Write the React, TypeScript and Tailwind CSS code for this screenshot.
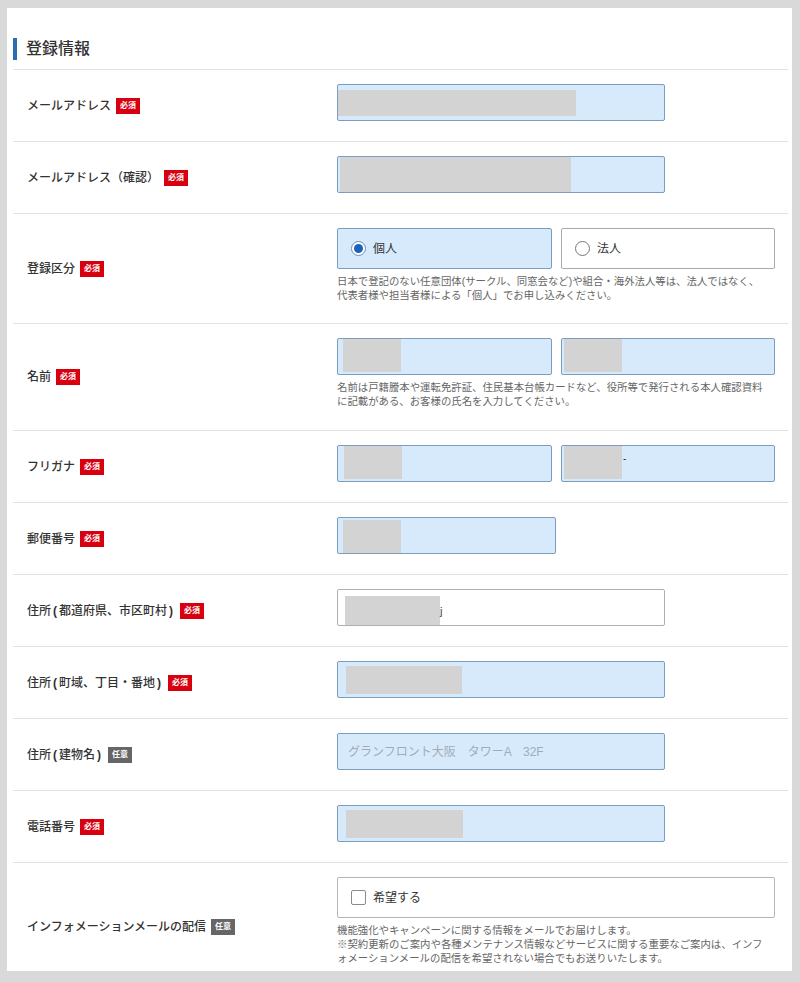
import type { ReactNode } from "react";

const FONT = "font-['Liberation_Sans','Noto_Sans_CJK_JP',sans-serif]";

export default function App() {
  return (
    <div className={`${FONT} min-h-[982px] bg-[#d9d9d9] pt-[8px] pb-[11px] pl-[7px] pr-[8px]`}>
      <div className="bg-white pl-[6px] pr-[4px]">
        <div className="flex items-center pt-[30px] pb-[9px]">
          <span className="h-[22px] w-[4px] bg-[#2a6db0]" />
          <h1 className="ml-[9px] text-[16px] font-medium leading-[22px] text-[#333]">登録情報</h1>
        </div>

        <Row label="メールアドレス" badge="required" height="h-[72px]">
          <Field width="w-[328px]">
            <Redact className="-ml-[2px] h-[26px] w-[240px]" />
          </Field>
        </Row>

        <Row label="メールアドレス（確認）" badge="required" height="h-[72px]">
          <Field width="w-[328px]">
            <Redact className="ml-[2px] h-[35px] w-[231px]" />
          </Field>
        </Row>

        <Row label="登録区分" badge="required" height="h-[110px]">
          <div className="flex gap-[9px]">
            <RadioBox label="個人" checked />
            <RadioBox label="法人" />
          </div>
          <Help>
            日本で登記のない任意団体(サークル、同窓会など)や組合・海外法人等は、法人ではなく、
            <br />
            代表者様や担当者様による「個人」でお申し込みください。
          </Help>
        </Row>

        <Row label="名前" badge="required" height="h-[107px]">
          <div className="flex gap-[9px]">
            <Field width="w-[215px]" align="items-start">
              <Redact className="ml-[5px] h-[33px] w-[58px]" />
            </Field>
            <Field width="w-[214px]" align="items-start">
              <Redact className="ml-[2px] h-[33px] w-[58px]" />
            </Field>
          </div>
          <Help>
            名前は戸籍謄本や運転免許証、住民基本台帳カードなど、役所等で発行される本人確認資料
            <br />
            に記載がある、お客様の氏名を入力してください。
          </Help>
        </Row>

        <Row label="フリガナ" badge="required" height="h-[72px]">
          <div className="flex gap-[9px]">
            <Field width="w-[215px]" align="items-start">
              <Redact className="ml-[6px] h-[33px] w-[58px]" />
            </Field>
            <Field width="w-[214px]" align="items-start">
              <Redact className="ml-[2px] h-[33px] w-[58px]" />
              <span className="ml-[1px] mt-[8px] text-[10px] leading-none text-[#333]">-</span>
            </Field>
          </div>
        </Row>

        <Row label="郵便番号" badge="required" height="h-[72px]">
          <Field width="w-[219px]" align="items-end">
            <Redact className="ml-[5px] h-[33px] w-[58px]" />
          </Field>
        </Row>

        <Row label="住所(都道府県、市区町村)" badge="required" height="h-[72px]">
          <Field width="w-[328px]" tone="plain" align="items-end">
            <Redact className="ml-[7px] h-[29px] w-[95px]" />
            <span className="mb-[8px] text-[11px] leading-none text-[#444]">j</span>
          </Field>
        </Row>

        <Row label="住所(町域、丁目・番地)" badge="required" height="h-[72px]">
          <Field width="w-[328px]">
            <Redact className="ml-[8px] h-[28px] w-[116px]" />
          </Field>
        </Row>

        <Row label="住所(建物名)" badge="optional" height="h-[72px]">
          <Field width="w-[328px]">
            <span className="pl-[10px] text-[12px] text-[#a3acb6]">グランフロント大阪　タワーA　32F</span>
          </Field>
        </Row>

        <Row label="電話番号" badge="required" height="h-[72px]">
          <Field width="w-[328px]">
            <Redact className="ml-[8px] h-[28px] w-[117px]" />
          </Field>
        </Row>

        <Row label="インフォメーションメールの配信" badge="optional" height="h-[109px]" last>
          <div className="flex h-[41px] w-[438px] items-center rounded-[2px] border border-[#b5b5b5] bg-white pl-[13px]">
            <span className="h-[15px] w-[15px] rounded-[2px] border border-[#8a8a8a] bg-white" />
            <span className="ml-[7px] text-[12px] text-[#333]">希望する</span>
          </div>
          <Help>
            機能強化やキャンペーンに関する情報をメールでお届けします。
            <br />
            ※契約更新のご案内や各種メンテナンス情報などサービスに関する重要なご案内は、インフ
            <br />
            ォメーションメールの配信を希望されない場合でもお送りいたします。
          </Help>
        </Row>
      </div>
    </div>
  );
}

function Row({
  label,
  badge,
  height,
  last,
  children,
}: {
  label: string;
  badge: "required" | "optional";
  height: string;
  last?: boolean;
  children: ReactNode;
}) {
  // half-width parens sit wider in the original font, pad them out a little
  const parts = label.split(/([()])/);
  return (
    <div className={`flex border-t border-[#e2e2e2] ${height}`}>
      <div className={`flex w-[324px] shrink-0 items-center pl-[14px] ${last ? "pt-[20px]" : ""}`}>
        <span className="text-[12px] font-medium text-[#333]">
          {parts.map((part, i) =>
            part === "(" || part === ")" ? (
              <span key={i} className="px-[2px] font-bold">
                {part}
              </span>
            ) : (
              part
            ),
          )}
        </span>
        <Badge kind={badge} />
      </div>
      <div className="flex-1 pt-[14px]">{children}</div>
    </div>
  );
}

function Badge({ kind }: { kind: "required" | "optional" }) {
  const required = kind === "required";
  return (
    <span
      className={`ml-[5px] flex h-[16px] w-[24px] items-center justify-center text-[8px] font-bold leading-none text-white ${
        required ? "bg-[#d8000f]" : "bg-[#666666]"
      }`}
    >
      {required ? "必須" : "任意"}
    </span>
  );
}

function Field({
  width,
  tone = "blue",
  align = "items-center",
  children,
}: {
  width: string;
  tone?: "blue" | "plain";
  align?: string;
  children?: ReactNode;
}) {
  const skin =
    tone === "blue" ? "border-[#7d9dc0] bg-[#d6eafc]" : "border-[#b0b0b0] bg-white";
  return (
    <div className={`flex h-[37px] overflow-hidden rounded-[2px] border ${align} ${skin} ${width}`}>
      {children}
    </div>
  );
}

function Redact({ className }: { className: string }) {
  return <span className={`block shrink-0 bg-[#d3d3d3] ${className}`} />;
}

function RadioBox({ label, checked }: { label: string; checked?: boolean }) {
  return (
    <div
      className={`flex h-[41px] items-center rounded-[2px] border pl-[13px] ${
        checked ? "w-[215px] border-[#7d9dc0] bg-[#d6eafc]" : "w-[214px] border-[#a9a9a9] bg-white"
      }`}
    >
      <span
        className={`flex h-[15px] w-[15px] items-center justify-center rounded-full border ${
          checked ? "border-[#6d8fb5] bg-white" : "border-[#777] bg-white"
        }`}
      >
        {checked ? <span className="h-[9px] w-[9px] rounded-full bg-[#1a62bd]" /> : null}
      </span>
      <span className="ml-[7px] text-[12px] text-[#333]">{label}</span>
    </div>
  );
}

function Help({ children }: { children: ReactNode }) {
  return <p className="mt-[6px] text-[10.4px] leading-[14px] text-[#666]">{children}</p>;
}
